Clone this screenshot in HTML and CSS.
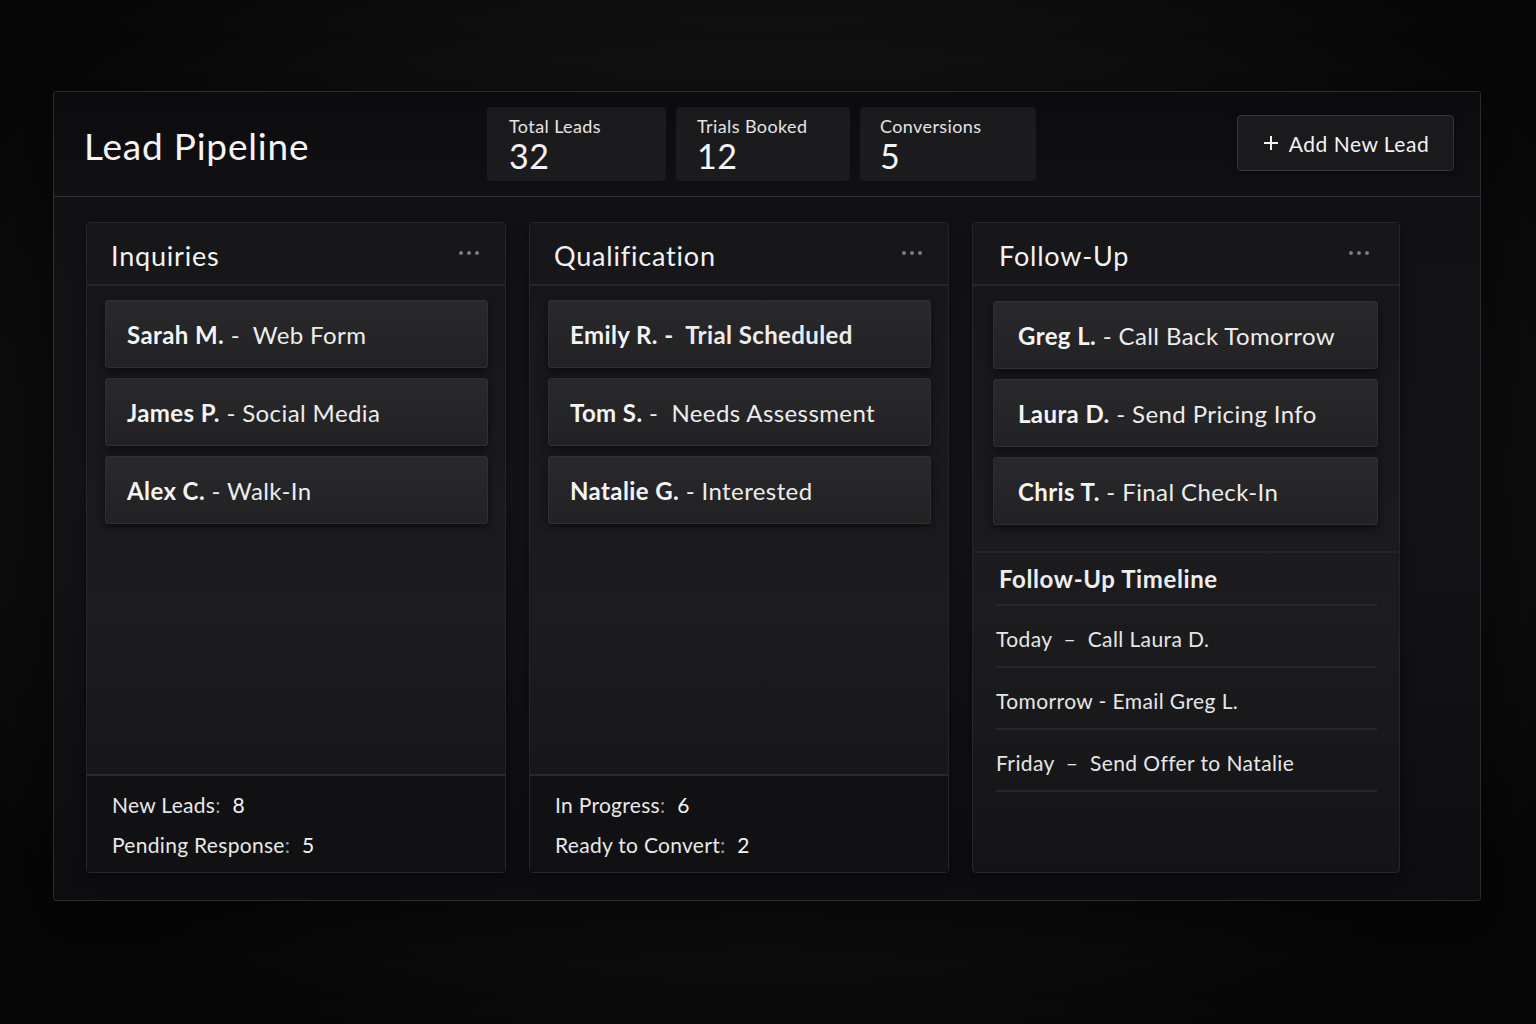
FILE: index.html
```html
<!DOCTYPE html>
<html>
<head>
	<title>Lead Pipeline</title>
	<meta charset="utf-8">
	<link rel="stylesheet" href="styles.css">
</head>
<body>
<div class="board">
	<!-- 顶部 -->
	<div class="head">
		<h1 class="title">Lead Pipeline</h1>
		<div class="stats">
			<div class="stat w1"><span class="lbl">Total Leads</span><span class="num">32</span></div>
			<div class="stat w2"><span class="lbl">Trials Booked</span><span class="num">12</span></div>
			<div class="stat w3"><span class="lbl">Conversions</span><span class="num">5</span></div>
		</div>
		<a class="add" href="javascript:;">
			<svg width="18" height="18" viewBox="0 0 18 18"><path d="M9 2v14M2 9h14" stroke="#f2f2f2" stroke-width="2" fill="none"/></svg>
			Add New Lead
		</a>
	</div>

	<!-- 列 -->
	<div class="cols">
		<div class="col">
			<div class="col-hd"><h2>Inquiries</h2><i class="dots"><b></b><b></b><b></b></i></div>
			<ul class="cards">
				<li><strong>Sarah M.</strong> - &nbsp;Web Form</li>
				<li><strong>James P.</strong> - Social Media</li>
				<li><strong>Alex C.</strong> - Walk-In</li>
			</ul>
			<div class="col-ft">
				<p>New Leads<span class="c">:</span> <em>8</em></p>
				<p>Pending Response<span class="c">:</span> <em>5</em></p>
			</div>
		</div>

		<div class="col">
			<div class="col-hd"><h2>Qualification</h2><i class="dots"><b></b><b></b><b></b></i></div>
			<ul class="cards">
				<li class="strong"><strong>Emily R.</strong> - &nbsp;Trial Scheduled</li>
				<li><strong>Tom S.</strong> - &nbsp;Needs Assessment</li>
				<li><strong>Natalie G.</strong> - Interested</li>
			</ul>
			<div class="col-ft">
				<p>In Progress<span class="c">:</span> <em>6</em></p>
				<p>Ready to Convert<span class="c">:</span> <em>2</em></p>
			</div>
		</div>

		<div class="col wide">
			<div class="col-hd"><h2>Follow-Up</h2><i class="dots"><b></b><b></b><b></b></i></div>
			<ul class="cards">
				<li><strong>Greg L.</strong> - Call Back Tomorrow</li>
				<li><strong>Laura D.</strong> - Send Pricing Info</li>
				<li><strong>Chris T.</strong> - Final Check-In</li>
			</ul>
			<div class="timeline">
				<h3>Follow-Up Timeline</h3>
				<ul>
					<li>Today &nbsp;–&nbsp; Call Laura D.</li>
					<li>Tomorrow - Email Greg L.</li>
					<li>Friday &nbsp;–&nbsp; Send Offer to Natalie</li>
				</ul>
			</div>
		</div>
	</div>
</div>
</body>
</html>
```

FILE: styles.css
```css
html, body, h1, h2, h3, p, ul, li { margin: 0; padding: 0; }
ul { list-style: none; }
a { text-decoration: none; color: #f2f2f2; }
em { font-style: normal; }

body {
	height: 1024px; overflow: hidden;
	font-family: Lato, "Noto Sans", sans-serif; color: #ececec;
	background: radial-gradient(ellipse 62% 60% at 50% 46%, #202023 0%, #141416 55%, #070708 100%);
	padding: 91px 0 0 53px; box-sizing: border-box;
}

.board {
	width: 1428px; height: 810px; box-sizing: border-box;
	border: 1px solid #2c2c30; border-radius: 3px;
	background: linear-gradient(180deg, #111114 0%, #141417 50%, #0d0d10 100%);
	box-shadow: 0 20px 60px 10px rgba(0,0,0,.55);
	display: flex; flex-direction: column;
}

/* header */
.head {
	height: 105px; box-sizing: border-box; flex: none;
	display: flex; align-items: center; padding: 0 26px 0 30px;
	border-bottom: 1px solid #2e2e32;
	background: linear-gradient(180deg, #0c0c0f, #101013);
}
.title { flex: 0 0 403px; font-size: 37px; font-weight: 400; color: #f4f4f4; letter-spacing: .8px; margin-top: 2px; }
.stats { display: flex; gap: 10px; }
.stat {
	height: 74px; box-sizing: border-box; padding: 9px 0 0 22px;
	background: #1b1b1e; border-radius: 4px; display: flex; flex-direction: column;
}
.w1 { width: 179px; }
.w2 { width: 174px; padding-left: 21px; }
.w3 { width: 176px; padding-left: 20px; }
.lbl { font-size: 18px; color: #e4e4e4; line-height: 21px; letter-spacing: .4px; }
.num { font-size: 34px; color: #f4f4f4; line-height: 38px; letter-spacing: .5px; }
.add {
	margin-left: auto; width: 217px; height: 56px; box-sizing: border-box;
	display: flex; align-items: center; justify-content: center; gap: 9px;
	border: 1px solid #36363a; border-radius: 4px; background: #1a1a1d;
	font-size: 21px; letter-spacing: .5px; margin-top: -2px; box-shadow: 0 2px 6px rgba(0,0,0,.5);
}

/* columns */
.cols { flex: 1; display: flex; gap: 23px; padding: 25px 0 27px 32px; }
.col {
	width: 420px; box-sizing: border-box; display: flex; flex-direction: column;
	border: 1px solid #26262a; border-radius: 4px;
	background: linear-gradient(180deg, #161619 0%, #1c1c1f 60%, #141417 100%);
	box-shadow: 0 4px 14px rgba(0,0,0,.45);
}
.col.wide { width: 428px; }
.col-hd {
	height: 63px; box-sizing: border-box; flex: none;
	display: flex; align-items: center; justify-content: space-between;
	padding: 4px 26px 0 24px; border-bottom: 2px solid #26262a;
	background: #17171a;
}
.wide .col-hd { padding: 4px 30px 0 26px; }
.col-hd h2 { font-size: 27px; font-weight: 400; color: #f2f2f2; letter-spacing: .8px; }
.dots { display: flex; gap: 4px; margin-top: -6px; }
.dots b { width: 4px; height: 4px; border-radius: 50%; background: #7c7c80; }

.cards { padding: 14px 17px 0 18px; display: flex; flex-direction: column; gap: 10px; }
.wide .cards { padding: 15px 21px 0 20px; }
.cards li {
	height: 68px; box-sizing: border-box; padding: 0 0 0 21px;
	display: flex; align-items: center; white-space: pre;
	font-size: 24px; letter-spacing: .4px; color: #ececec;
	background: linear-gradient(180deg, #29292c, #222225);
	border: 1px solid #303034; border-radius: 3px;
	box-shadow: 0 3px 8px rgba(0,0,0,.55);
}
.cards li strong { font-weight: 700; color: #f4f4f4; }
.cards li.strong { font-weight: 700; }
.wide .cards li { padding-left: 24px; }

.col-ft {
	margin-top: auto; height: 98px; box-sizing: border-box;
	border-top: 2px solid #2a2a2e; padding: 9px 0 0 25px;
	background: #111114;
}
.col-ft p { font-size: 21px; letter-spacing: .3px; line-height: 40px; color: #e8e8e8; white-space: pre; }
.col-ft .c { color: #999; margin-right: 6px; }
.col-ft em { color: #f4f4f4; }

/* timeline */
.timeline { margin-top: 26px; border-top: 2px solid #242427; padding: 0 22px 0 23px; }
.timeline h3 {
	height: 53px; box-sizing: border-box; padding: 11px 0 0 3px;
	font-size: 24px; letter-spacing: .6px; font-weight: 700; color: #eeeeee;
	border-bottom: 2px solid #2a2a2e;
}
.timeline li {
	height: 62px; box-sizing: border-box; padding-top: 20px;
	font-size: 21px; letter-spacing: .4px; color: #e6e6e6; border-bottom: 2px solid #27272a;
}
```
